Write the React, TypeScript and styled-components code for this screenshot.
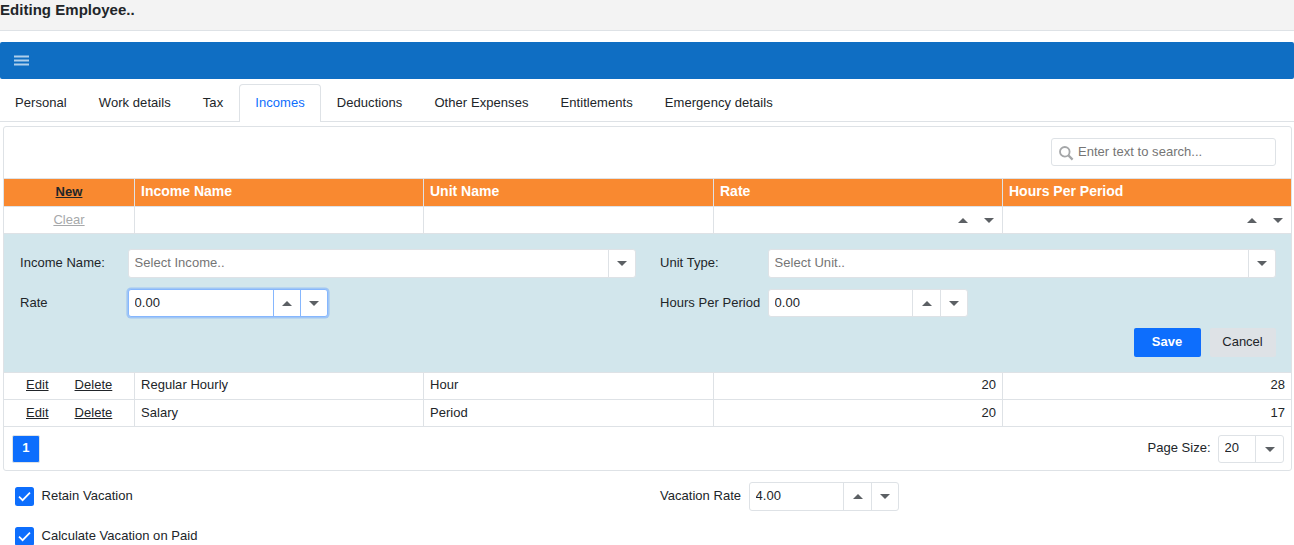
import React from 'react';
import styled, { createGlobalStyle, css } from 'styled-components';

const line = '#dee2e6';
const blue = '#0d6efd';

const GlobalStyle = createGlobalStyle`
  *, *::before, *::after { box-sizing: border-box; }
  html, body { margin: 0; background: #fff; overflow: hidden; height: 545px; }
  body { font: 13px/20px "Liberation Sans", Arial, sans-serif; color: #212529; letter-spacing: 0.03px; }
  input { font: inherit; letter-spacing: inherit; color: inherit; }
`;

const Page = styled.div`
  height: 545px;
  overflow: hidden;
`;

const TitleBar = styled.header`
  height: 31px;
  background: #f3f3f3;
  border-bottom: 1px solid ${line};
  font-size: 15px;
  font-weight: 700;
  line-height: 20px;
`;

const MenuBar = styled.nav`
  display: flex;
  align-items: center;
  height: 37px;
  margin-top: 11px;
  padding-left: 14px;
  border-radius: 2px;
  background: #0f6ec3;
`;

const Tabs = styled.div`
  display: flex;
  height: 38px;
  margin: 5px 0 0 -1px;
  border-bottom: 1px solid ${line};
`;

const Tab = styled.div<{ $active?: boolean }>`
  height: 38px;
  padding: 8px 15px 0;
  border: 1px solid transparent;
  border-bottom: 0;
  border-radius: 4px 4px 0 0;
  white-space: nowrap;
  letter-spacing: 0.06px;
  ${p => p.$active && css`
    color: ${blue};
    background: #fff;
    border-color: ${line};
  `}
`;

const Grid = styled.section`
  width: 1289px;
  height: 345px;
  margin: 4px 0 0 3px;
  border: 1px solid ${line};
  border-radius: 3px;
`;

const Toolbar = styled.div`
  display: flex;
  justify-content: flex-end;
  height: 52px;
  padding: 11px 15px 0 0;
  border-bottom: 1px solid ${line};
`;

const SearchBox = styled.label`
  display: flex;
  align-items: center;
  width: 225px;
  height: 28px;
  padding: 0 6px 0 7px;
  gap: 4px;
  border: 1px solid ${line};
  border-radius: 3px;
  svg { flex: none; margin-top: 2px; }
`;

const TextInput = styled.input`
  flex: 1;
  min-width: 0;
  height: 20px;
  padding: 0;
  border: 0;
  outline: 0;
  background: transparent;
  &::placeholder { color: #757575; opacity: 1; }
`;

const Row = styled.div<{ $head?: boolean; $h?: number }>`
  display: grid;
  grid-template-columns: 131px 289px 290px 289px 288px;
  height: ${p => p.$h ?? 27}px;
  border-bottom: 1px solid ${line};
  ${p => p.$head && css`
    background: #f98930;
    color: #fff;
    font-weight: 700;
  `}
`;

const Cell = styled.div<{ $align?: string; $top?: number }>`
  display: flex;
  justify-content: ${p => p.$align ?? 'flex-start'};
  padding: ${p => p.$top ?? 2}px 6px 0;
  border-right: 1px solid ${line};
  &:last-child { border-right: 0; }
`;

const HeadCell = styled(Cell)`
  font-size: 14px;
  letter-spacing: 0;
`;

const Link = styled.a<{ $muted?: boolean }>`
  color: ${p => (p.$muted ? '#a6a8aa' : '#212529')};
  text-decoration: underline;
`;

const Commands = styled(Cell)`
  justify-content: flex-start;
  gap: 26px;
  padding-left: 22px;
`;

const FilterSpin = styled(Cell)`
  align-items: center;
  justify-content: flex-end;
  gap: 16px;
  padding: 0 8.5px 0 0;
`;

const EditForm = styled.div`
  height: 139px;
  padding: 15px 15px 0 16px;
  background: #d2e6ec;
  border-bottom: 1px solid ${line};
`;

const FormRow = styled.div<{ $h: number }>`
  display: grid;
  grid-template-columns: 640px 1fr;
  height: ${p => p.$h}px;
`;

const Field = styled.div`
  display: flex;
  align-items: flex-start;
`;

const Label = styled.span<{ $w: number; $top?: number }>`
  flex: none;
  width: ${p => p.$w}px;
  padding-top: ${p => p.$top ?? 4}px;
  white-space: nowrap;
`;

const Editor = styled.div<{ $w: number; $h?: number; $focus?: boolean }>`
  display: flex;
  width: ${p => p.$w}px;
  height: ${p => p.$h ?? 28}px;
  background: #fff;
  border: 1px solid ${p => (p.$focus ? '#86b7fe' : line)};
  border-radius: 3px;
  ${p => p.$focus && css`box-shadow: 0 0 0 1.6px #a0c6f4;`}
`;

const EditorText = styled(TextInput)<{ $top?: number }>`
  margin: ${p => p.$top ?? 3}px 0 0 5.5px;
`;

const EditorButton = styled.button<{ $w?: number; $focus?: boolean }>`
  display: flex;
  align-items: center;
  justify-content: center;
  width: ${p => p.$w ?? 27}px;
  padding: 0;
  border: 0;
  border-left: 1px solid ${p => (p.$focus ? '#86b7fe' : line)};
  background: transparent;
`;

const Actions = styled.div`
  display: flex;
  justify-content: flex-end;
  gap: 9px;
`;

const Button = styled.button<{ $primary?: boolean }>`
  width: ${p => (p.$primary ? 67 : 66)}px;
  height: 29px;
  padding: 0 1px 2px 0;
  border: 0;
  border-radius: 2px;
  background: ${p => (p.$primary ? blue : '#dee2e6')};
  color: ${p => (p.$primary ? '#fff' : '#212529')};
  font: ${p => (p.$primary ? 700 : 400)} 13px/20px "Liberation Sans", Arial, sans-serif;
`;

const Pager = styled.div`
  display: flex;
  justify-content: space-between;
  padding: 8px 7px 0 8px;
`;

const PageNumber = styled.div`
  width: 28px;
  height: 28px;
  padding-top: 2px;
  border: 1px solid ${line};
  border-radius: 2px;
  background: ${blue};
  color: #fff;
  font-weight: 700;
  text-align: center;
`;

const Options = styled.div`
  display: grid;
  grid-template-columns: 645px 1fr;
  grid-auto-rows: 40px;
  padding: 11px 0 0 15px;
`;

const Check = styled.div`
  display: flex;
  align-items: flex-start;
  gap: 7.5px;
  padding-top: 4px;
  svg { margin-top: 1px; }
`;

const Arrow = ({ up }: { up?: boolean }) => (
  <svg width="10" height="5" viewBox="0 0 10 5" style={{ display: 'block' }}>
    <path d={up ? 'M0 5L5 0L10 5Z' : 'M0 0H10L5 5Z'} fill="#5c6064" />
  </svg>
);

const CheckIcon = () => (
  <svg width="19" height="19" viewBox="0 0 19 19">
    <rect width="19" height="19" rx="2.5" fill={blue} />
    <path d="M4 9.7L7.6 13.2L15 5.6" fill="none" stroke="#fff" strokeWidth="1.7" />
  </svg>
);

const Spin = ({ value, width, height, focus }: { value: string; width: number; height?: number; focus?: boolean }) => (
  <Editor $w={width} $h={height} $focus={focus}>
    <EditorText defaultValue={value} />
    <EditorButton $w={focus ? 27 : 28} $focus={focus}><Arrow up /></EditorButton>
    <EditorButton $focus={focus}><Arrow /></EditorButton>
  </Editor>
);

const Combo = ({ placeholder }: { placeholder: string }) => (
  <Editor $w={508} $h={29}>
    <EditorText placeholder={placeholder} />
    <EditorButton><Arrow /></EditorButton>
  </Editor>
);

const tabs = ['Personal', 'Work details', 'Tax', 'Incomes', 'Deductions', 'Other Expenses', 'Entitlements', 'Emergency details'];
const columns = ['Income Name', 'Unit Name', 'Rate', 'Hours Per Period'];
const incomes = [
  { name: 'Regular Hourly', unit: 'Hour', rate: 20, hours: 28 },
  { name: 'Salary', unit: 'Period', rate: 20, hours: 17 },
];

export default function App() {
  return (
    <Page>
      <GlobalStyle />
      <TitleBar>Editing Employee..</TitleBar>
      <MenuBar>
        <svg width="15" height="11" viewBox="0 0 15 11">
          <path d="M0 1.5H15M0 5.5H15M0 9.5H15" stroke="#b0cfeb" strokeWidth="2" />
        </svg>
      </MenuBar>
      <Tabs>
        {tabs.map(t => <Tab key={t} $active={t === 'Incomes'}>{t}</Tab>)}
      </Tabs>
      <Grid>
        <Toolbar>
          <SearchBox>
            <svg width="15" height="15" viewBox="0 0 15 15" fill="none" stroke="#a4a6a8" strokeWidth="1.8">
              <circle cx="5.8" cy="5.8" r="4.8" />
              <path d="M9.4 9.4L13.6 13.6" strokeWidth="2.2" />
            </svg>
            <TextInput placeholder="Enter text to search..." />
          </SearchBox>
        </Toolbar>
        <Row $head $h={28}>
          <Cell $align="center" $top={3}><Link>New</Link></Cell>
          {columns.map(c => <HeadCell key={c}>{c}</HeadCell>)}
        </Row>
        <Row>
          <Cell $align="center" $top={3}><Link $muted>Clear</Link></Cell>
          <Cell />
          <Cell />
          <FilterSpin><Arrow up /><Arrow /></FilterSpin>
          <FilterSpin><Arrow up /><Arrow /></FilterSpin>
        </Row>
        <EditForm>
          <FormRow $h={40}>
            <Field><Label $w={108}>Income Name:</Label><Combo placeholder="Select Income.." /></Field>
            <Field><Label $w={108}>Unit Type:</Label><Combo placeholder="Select Unit.." /></Field>
          </FormRow>
          <FormRow $h={39}>
            <Field><Label $w={108}>Rate</Label><Spin value="0.00" width={200} focus /></Field>
            <Field><Label $w={108}>Hours Per Period</Label><Spin value="0.00" width={200} /></Field>
          </FormRow>
          <Actions>
            <Button $primary>Save</Button>
            <Button>Cancel</Button>
          </Actions>
        </EditForm>
        {incomes.map((r, i) => (
          <Row key={r.name}>
            <Commands $top={2 + i}><Link>Edit</Link><Link>Delete</Link></Commands>
            <Cell $top={2 + i}>{r.name}</Cell>
            <Cell $top={2 + i}>{r.unit}</Cell>
            <Cell $top={2 + i} $align="flex-end">{r.rate}</Cell>
            <Cell $top={2 + i} $align="flex-end">{r.hours}</Cell>
          </Row>
        ))}
        <Pager>
          <PageNumber>1</PageNumber>
          <Field>
            <Label $w={70.5} $top={3}>Page Size:</Label>
            <Editor $w={66}>
              <EditorText $top={2} defaultValue="20" />
              <EditorButton $w={28}><Arrow /></EditorButton>
            </Editor>
          </Field>
        </Pager>
      </Grid>
      <Options>
        <Check><CheckIcon />Retain Vacation</Check>
        <Field><Label $w={89}>Vacation Rate</Label><Spin value="4.00" width={150} height={29} /></Field>
        <Check><CheckIcon />Calculate Vacation on Paid</Check>
      </Options>
    </Page>
  );
}
